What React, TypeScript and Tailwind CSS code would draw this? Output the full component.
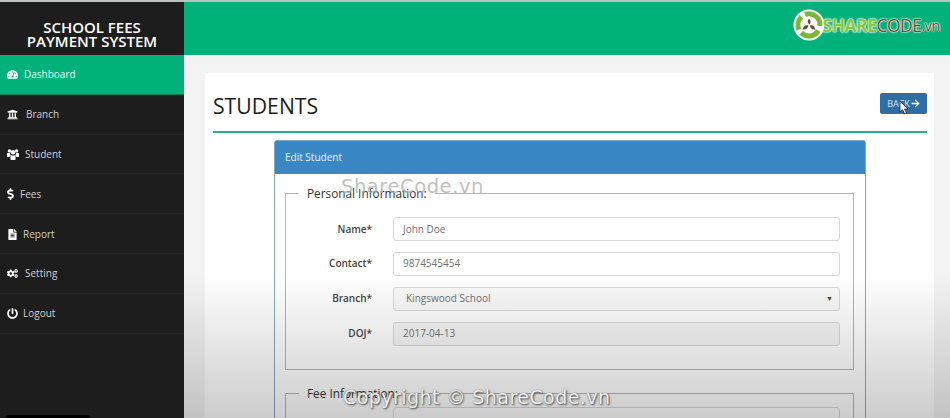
import { FaTachometerAlt, FaUniversity, FaDollarSign, FaFileAlt, FaCogs, FaPowerOff, FaArrowRight } from "react-icons/fa";

function GroupIcon({ className }: { className?: string }) {
  return (
    <svg viewBox="0 0 12 11" className={className} fill="currentColor">
      <circle cx="2.4" cy="1.9" r="1.7" />
      <circle cx="9.6" cy="1.9" r="1.7" />
      <circle cx="6" cy="3.2" r="2.3" />
      <path d="M0 4.4 Q0 4 .5 4 L3 4 Q3 5.6 4 6.4 Q2.9 6.8 2.6 8 L.6 8 Q0 8 0 7.4 Z" />
      <path d="M12 4.4 Q12 4 11.5 4 L9 4 Q9 5.6 8 6.4 Q9.1 6.8 9.4 8 L11.4 8 Q12 8 12 7.4 Z" />
      <path d="M3.4 8 Q3.4 6.4 4.6 6.2 Q6 7 7.4 6.2 Q8.6 6.4 8.6 8 L8.6 10 Q8.6 11 7.6 11 L4.4 11 Q3.4 11 3.4 10 Z" />
    </svg>
  );
}

const nav = [
  { label: "Dashboard", icon: FaTachometerAlt, gap: "gap-[6px]", active: true },
  { label: "Branch", icon: FaUniversity, gap: "gap-[8px]" },
  { label: "Student", icon: GroupIcon, gap: "gap-[6px]", big: true },
  { label: "Fees", icon: FaDollarSign, gap: "gap-[6px]", small: true },
  { label: "Report", icon: FaFileAlt, gap: "gap-[5px]" },
  { label: "Setting", icon: FaCogs, gap: "gap-[7px]" },
  { label: "Logout", icon: FaPowerOff, gap: "gap-[5px]" },
];

function Field({ label, value, kind }: { label: string; value: string; kind?: "select" | "disabled" }) {
  return (
    <div className="flex items-center h-[25px]">
      <span className="w-[73px] text-right text-[10px] text-[#444] font-semibold shrink-0">{label}</span>
      <div
        className={
          "ml-[21px] flex-1 h-[24px] rounded-[3px] border border-[#d8d8d8] flex items-center text-[10px] text-[#717171] " +
          (kind === "select" ? "pl-[12px] pr-[6px] justify-between bg-[#f9f9f9]" : kind === "disabled" ? "pl-[9px] bg-[#f6f6f6]" : "pl-[9px] bg-white")
        }
      >
        <span>{value}</span>
        {kind === "select" && <span className="text-[7px] text-[#444]">▼</span>}
      </div>
    </div>
  );
}

function LogoMark() {
  return (
    <svg width="32" height="32" viewBox="0 0 32 32" className="shrink-0">
      <circle cx="16" cy="16" r="15.5" fill="#fff" />
      <g fill="none" stroke="#7cb637" strokeWidth="5">
        <path d="M12 5.6 A11 11 0 0 1 26.9 17" />
        <path d="M25.4 21.6 A11 11 0 0 1 8.2 23.8" />
        <path d="M6 20.6 A11 11 0 0 1 8.4 8" />
      </g>
      <path d="M16 9.5 C18 12 18 14 16.5 15.5 C14.5 14 14 12 16 9.5 Z" fill="#6d4a2e" />
      <path d="M16.8 16.5 C19 15.5 21.5 17 22.5 20.5 C19.5 21 17.5 19.5 16.8 16.5 Z" fill="#6d4a2e" />
      <path d="M15.4 16.5 C15.2 19 13 21 9.5 20.5 C10.2 17.5 12.5 15.5 15.4 16.5 Z" fill="#6d4a2e" />
    </svg>
  );
}

export default function App() {
  return (
    <div className="relative w-[950px] h-[418px] overflow-hidden flex flex-col bg-[#f3f3f3] font-['Open_Sans',sans-serif]">
      <div className="h-[2px] bg-[#b9c4c0] shrink-0" />
      <div className="flex flex-1 min-h-0">
        <aside className="w-[184px] shrink-0 bg-[#1d1d1d] flex flex-col">
          <div className="h-[53px] flex items-center justify-center pt-[11px] text-center text-white font-semibold text-[15px] leading-[14.5px]">
            <div>
              SCHOOL FEES
              <br />
              PAYMENT SYSTEM
            </div>
          </div>
          {nav.map((n) => {
            const Icon = n.icon;
            return (
              <div
                key={n.label}
                className={
                  "h-[39.8px] flex items-center pl-[7px] pt-[1px] text-[10px] border-b " +
                  n.gap +
                  " " +
                  (n.active ? "bg-[#00b17a] border-[#0c7a56] text-[#e6fff5]" : "border-[#262626] text-[#d0d0d0]")
                }
              >
                <Icon className={n.small ? "w-[7px] h-[12px] text-white" : n.big ? "w-[12px] h-[11px] text-white" : "w-[11px] h-[11px] text-white"} />
                <span>{n.label}</span>
              </div>
            );
          })}
        </aside>
        <main className="flex-1 min-w-0 flex flex-col">
          <header className="h-[53px] shrink-0 bg-[#00b17a] flex items-start justify-end pt-[7px] pr-[10px]">
            <div className="flex items-center">
              <LogoMark />
              <span className="text-[17.5px] font-bold text-[#8cc63f] tracking-[-0.5px] -ml-[2px] [text-shadow:0_0_1px_#fff,0_0_2px_#fff,0_0_2px_#fff]">SHARE</span>
              <span className="text-[17.5px] text-[#6d4a2e] tracking-[-0.5px] [text-shadow:0_0_1px_#fff,0_0_2px_#fff,0_0_2px_#fff]">CODE</span>
              <span className="text-[14.5px] text-[#6d4a2e] tracking-[-0.5px] mt-[2px] [text-shadow:0_0_1px_#fff,0_0_2px_#fff,0_0_2px_#fff]">.vn</span>
            </div>
          </header>
          <div className="flex-1 min-h-0 pt-[18px] pl-[21px] pr-[16px]">
            <div className="h-[400px] bg-white pl-[8px] pr-[7px]">
              <div className="h-[60px] flex items-center justify-between border-b-2 border-[#2eae8e]">
                <h1 className="text-[21.2px] text-[#1c1c1c] font-medium pt-[8px]">STUDENTS</h1>
                <button className="w-[47px] h-[21px] mt-[3px] rounded-[2px] bg-[#2f6ea5] text-[#cfe0ef] text-[9px] flex items-center justify-center gap-[1px]">
                  BACK <FaArrowRight className="w-[9px] h-[9px] text-white" />
                </button>
              </div>
              <div className="mt-[7px] ml-[61px] w-[592px] border border-[#7fa9c9] rounded-t-[3px]">
                <div className="h-[33px] bg-[#3a87c6] flex items-center pl-[10px] text-[10px] text-[#e6f1fa]">Edit Student</div>
                <div className="pl-[10px] pr-[11px] pt-[11px]">
                  <fieldset className="border border-[#b5b5b5] h-[185px] px-[13px]">
                    <legend className="px-[8px] text-[11.8px] text-[#333]">Personal Information:</legend>
                    <div className="pt-[14px] flex flex-col gap-[9.8px]">
                      <Field label="Name*" value="John Doe" />
                      <Field label="Contact*" value="9874545454" />
                      <Field label="Branch*" value="Kingswood School" kind="select" />
                      <Field label="DOJ*" value="2017-04-13" kind="disabled" />
                    </div>
                  </fieldset>
                  <fieldset className="border border-[#b5b5b5] mt-[15px] h-[80px] px-[13px]">
                    <legend className="px-[8px] text-[11.8px] text-[#333]">Fee Information:</legend>
                    <div className="pt-[4px] flex flex-col">
                      <Field label="" value="" />
                    </div>
                  </fieldset>
                </div>
              </div>
            </div>
          </div>
        </main>
      </div>
      <div className="absolute left-[184px] right-0 bottom-0 h-[145px] pointer-events-none bg-gradient-to-b from-black/0 to-black/20" />
      <div className="absolute left-[341px] top-[172px] text-[19.5px] tracking-[0.55px] text-[#b0b0b0]/80 font-['DejaVu_Sans',sans-serif] pointer-events-none">ShareCode.vn</div>
      <div className="absolute left-[343px] top-[383px] text-[19px] tracking-[0.45px] text-white/90 font-['DejaVu_Sans',sans-serif] pointer-events-none [text-shadow:1px_1px_2px_#444,0_0_1px_#666]">Copyright © ShareCode.vn</div>
      <svg className="absolute left-[899px] top-[100px]" width="11" height="15" viewBox="0 0 11 15">
        <path d="M1 1 L1 12 L3.6 9.8 L5.6 14 L7.4 13 L5.5 9 L9 9 Z" fill="#fff" stroke="#222" strokeWidth="0.8" />
      </svg>
      <div className="absolute left-[6px] bottom-0 w-[84px] h-[3px] bg-black" />
    </div>
  );
}
